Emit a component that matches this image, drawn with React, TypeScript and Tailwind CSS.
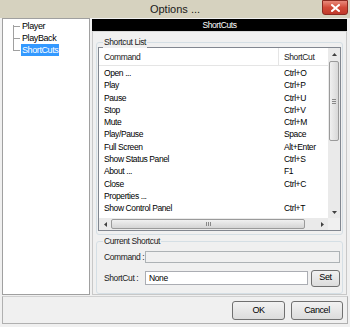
import React from "react";

const rows: [string, string][] = [
  ["Open ...", "Ctrl+O"],
  ["Play", "Ctrl+P"],
  ["Pause", "Ctrl+U"],
  ["Stop", "Ctrl+V"],
  ["Mute", "Ctrl+M"],
  ["Play/Pause", "Space"],
  ["Full Screen", "Alt+Enter"],
  ["Show Status Panel", "Ctrl+S"],
  ["About ...", "F1"],
  ["Close", "Ctrl+C"],
  ["Properties ...", ""],
  ["Show Control Panel", "Ctrl+T"],
];

function Btn({ children, className }: { children: React.ReactNode; className: string }) {
  return (
    <div
      className={
        "flex items-center justify-center rounded-[3px] border border-[#707070] bg-gradient-to-b from-[#f2f2f2] to-[#dcdcdc] text-[9px] text-black " +
        className
      }
    >
      {children}
    </div>
  );
}

export default function App() {
  return (
    <div
      className="w-[350px] h-[327px] bg-[#f0f0f0] flex flex-col overflow-hidden text-black tracking-[-0.4px]"
      style={{ fontFamily: '"Liberation Sans", Arial, sans-serif' }}
    >
      {/* Title bar */}
      <div className="h-[18px] bg-[#d6d2bf] relative flex items-center justify-center shrink-0">
        <span className="text-[11px] text-[#1a1a1a] tracking-normal pt-[1px]">Options ...</span>
        <div className="absolute right-[2px] top-0 w-[26px] h-[15px] rounded-b-[3px] border border-[#8a2a20] bg-gradient-to-b from-[#e8897a] via-[#d24a38] to-[#c0392b] flex items-center justify-center">
          <svg width="9" height="8" viewBox="0 0 9 8">
            <path d="M1 1 L8 7 M8 1 L1 7" stroke="#ffffff" strokeWidth="2" strokeLinecap="square" />
          </svg>
        </div>
      </div>

      {/* Main */}
      <div className="flex h-[277px] pl-[2px] pr-[3px] gap-[2px] shrink-0">
        {/* Tree */}
        <div className="w-[89px] bg-white border border-[#a0a0a0] relative">
          <div className="absolute left-[10px] top-[6px] h-[25px] border-l border-[#a0a0a0]" />
          {[
            { t: "Player", y: 0 },
            { t: "PlayBack", y: 12 },
            { t: "ShortCuts", y: 24 },
          ].map((it, i) => (
            <div key={i} className="absolute left-[10px] flex items-center" style={{ top: 1 + it.y }}>
              <div className="w-[7px] border-t border-[#a0a0a0]" />
              <span
                className={
                  "text-[9px] leading-[12px] px-[1px] ml-[1px] " +
                  (i === 2 ? "bg-[#3399ff] text-white" : "text-black")
                }
              >
                {it.t}
              </span>
            </div>
          ))}
        </div>

        {/* Right panel */}
        <div className="flex-1 flex flex-col">
          <div className="h-[12px] mt-[1px] bg-black text-white text-[8.5px] leading-[12px] text-center">ShortCuts</div>
          <div className="flex-1 border border-[#c8c8c8] border-t-[#d8d8d8] pl-[3px] pr-[3px] pt-[4px] flex flex-col">
            {/* Shortcut List group */}
            <div className="relative border border-[#d5dfe5] rounded-[3px] h-[193px] mt-[6px] px-[1px] pt-[4px]">
              <span className="absolute left-[6px] -top-[6px] bg-[#f0f0f0] px-[1px] text-[8.5px] leading-[11px] text-[#1a1a1a]">
                Shortcut List
              </span>
              <div className="h-[184px] bg-white border border-[#828790] flex flex-col">
                <div className="flex flex-1 min-h-0">
                  <div className="flex-1 flex flex-col">
                    <div className="h-[18px] flex border-b border-[#e5e5e5] text-[8.5px] text-[#1a1a1a]">
                      <div className="w-[180px] pl-[5px] flex items-center border-r border-[#e5e5e5] pt-[1px]">Command</div>
                      <div className="flex-1 pl-[5px] flex items-center pt-[1px]">ShortCut</div>
                    </div>
                    <div className="pt-[1px]">
                      {rows.map(([c, s], i) => (
                        <div key={i} className="h-[12.3px] flex text-[8.5px] leading-[12.3px]">
                          <div className="w-[180px] pl-[5px]">{c}</div>
                          <div className="flex-1 pl-[5px]">{s}</div>
                        </div>
                      ))}
                    </div>
                  </div>
                  {/* vertical scrollbar */}
                  <div className="w-[12px] bg-[#eaeaea] flex flex-col items-center">
                    <div className="h-[13px] flex items-center justify-center">
                      <svg width="5" height="3" viewBox="0 0 5 3"><path d="M0 3 L2.5 0 L5 3Z" fill="#404040" /></svg>
                    </div>
                    <div className="w-[10px] h-[80px] rounded-[2px] border border-[#9a9a9a] bg-gradient-to-r from-[#f0f0f0] to-[#d8d8d8] flex items-center justify-center">
                      <div className="w-[4px] flex flex-col gap-[1px]">
                        <div className="h-px bg-[#888]" />
                        <div className="h-px bg-[#888]" />
                        <div className="h-px bg-[#888]" />
                      </div>
                    </div>
                    <div className="flex-1" />
                    <div className="h-[12px] flex items-center justify-center">
                      <svg width="5" height="3" viewBox="0 0 5 3"><path d="M0 0 L2.5 3 L5 0Z" fill="#404040" /></svg>
                    </div>
                  </div>
                </div>
                {/* horizontal scrollbar */}
                <div className="h-[12px] flex bg-[#eaeaea]">
                  <div className="w-[12px] flex items-center justify-center">
                    <svg width="3" height="5" viewBox="0 0 3 5"><path d="M3 0 L0 2.5 L3 5Z" fill="#404040" /></svg>
                  </div>
                  <div className="w-[194px] h-[10px] my-[1px] rounded-[2px] border border-[#9a9a9a] bg-gradient-to-b from-[#f0f0f0] to-[#d4d4d4] flex items-center justify-center">
                    <div className="h-[4px] flex gap-[1px]">
                      <div className="w-px bg-[#888]" />
                      <div className="w-px bg-[#888]" />
                      <div className="w-px bg-[#888]" />
                    </div>
                  </div>
                  <div className="flex-1" />
                  <div className="w-[12px] flex items-center justify-center">
                    <svg width="3" height="5" viewBox="0 0 3 5"><path d="M0 0 L3 2.5 L0 5Z" fill="#404040" /></svg>
                  </div>
                  <div className="w-[12px] bg-[#f0f0f0]" />
                </div>
              </div>
            </div>

            {/* Current Shortcut group */}
            <div className="relative border border-[#d5dfe5] rounded-[3px] h-[53px] mt-[6px] pl-[7px] pr-[2px] pt-[9px]">
              <span className="absolute left-[6px] -top-[6px] bg-[#f0f0f0] px-[1px] text-[8.5px] leading-[11px] text-[#1a1a1a]">
                Current Shortcut
              </span>
              <div className="flex items-center h-[12px]">
                <span className="w-[41px] shrink-0 whitespace-nowrap text-[8.5px] text-[#1a1a1a]">Command :</span>
                <div className="flex-1 h-[12px] border border-[#adb2b5] bg-[#f0f0f0]" />
              </div>
              <div className="flex items-center mt-[7px] h-[16px]">
                <span className="w-[41px] shrink-0 whitespace-nowrap text-[8.5px] text-[#1a1a1a]">ShortCut :</span>
                <div className="w-[163px] h-[14px] border border-[#abadb3] bg-white text-[8.5px] leading-[12px] pl-[3px]">None</div>
                <Btn className="ml-[3px] w-[29px] h-[17px]">Set</Btn>
              </div>
            </div>
          </div>
        </div>
      </div>

      {/* Bottom bar */}
      <div className="mx-[2px] mt-[1px] h-[28px] border border-[#b0b0b0] border-t-[#d0d0d0] flex items-center justify-end gap-[6px] pr-[4px] pt-[1px]">
        <Btn className="w-[53px] h-[19px]">OK</Btn>
        <Btn className="w-[52px] h-[19px]">Cancel</Btn>
      </div>
    </div>
  );
}
